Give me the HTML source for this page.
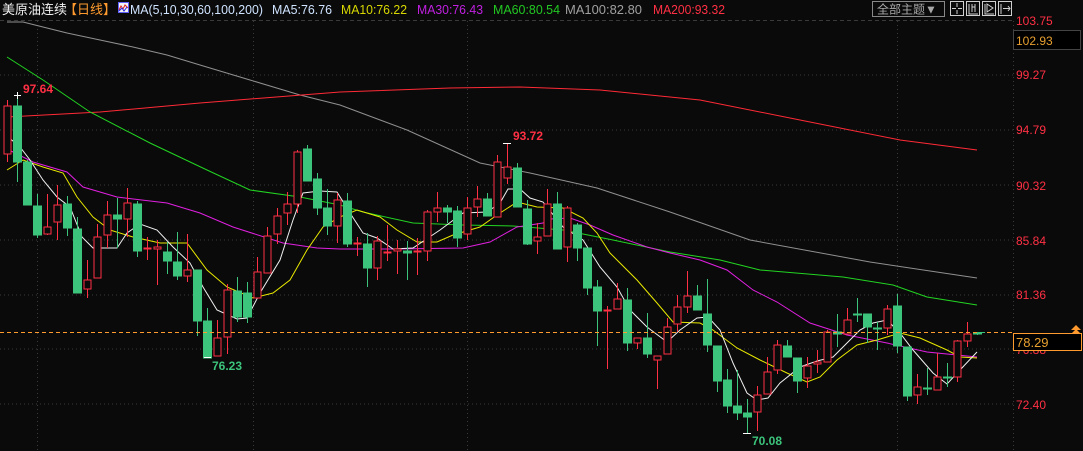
<!DOCTYPE html>
<html><head><meta charset="utf-8"><style>
html,body{margin:0;padding:0;background:#0a0a0a;width:1083px;height:451px;overflow:hidden}
svg{display:block}
text{font-family:"Liberation Sans","Noto Sans CJK SC",sans-serif}
</style></head><body>
<svg width="1083" height="451" viewBox="0 0 1083 451" xmlns="http://www.w3.org/2000/svg">
<rect width="1083" height="451" fill="#0a0a0a"/>
<g stroke="#3a3a3a" stroke-width="1" stroke-dasharray="1,3">
<line x1="0" y1="75" x2="1013" y2="75"/><line x1="0" y1="130" x2="1013" y2="130"/>
<line x1="0" y1="185" x2="1013" y2="185"/><line x1="0" y1="240" x2="1013" y2="240"/>
<line x1="0" y1="295" x2="1013" y2="295"/><line x1="0" y1="349" x2="1013" y2="349"/>
<line x1="0" y1="404" x2="1013" y2="404"/>
<line x1="37.5" y1="21" x2="37.5" y2="451"/><line x1="253.5" y1="21" x2="253.5" y2="451"/>
<line x1="467.5" y1="21" x2="467.5" y2="451"/><line x1="897.5" y1="21" x2="897.5" y2="451"/>
<line x1="1013.5" y1="21" x2="1013.5" y2="451"/>
</g>
<line x1="0" y1="20.5" x2="1013" y2="20.5" stroke="#3a3a3a" stroke-dasharray="4,3"/>
<g fill="none" stroke-width="1">
<polyline stroke="#909090" points="7,22 23,22 35,25 67,33 100,40 133,47 167,55 200,65 250,80 300,95 340,105 407,130 480,163 530,173 597,188 670,212 750,240 870,262 977,278"/>
<polyline stroke="#ff2a36" points="7,117 100,112 200,103 340,92 450,88 520,87 600,90 700,100 800,120 900,140 977,150"/>
<polyline stroke="#22d422" points="7,57 43,80 90,112 150,143 207,170 250,190 300,197 340,205 363,212 413,223 463,225 513,226 563,230 613,240 670,252 720,260 760,270 843,277 893,285 927,297 977,305"/>
<polyline stroke="#e020e0" points="7,149 33,162 67,172 83,187 117,197 167,203 200,213 233,227 283,243 317,248 340,249 397,249 463,248 490,242 517,227 543,223 550,219 570,218 590,225 613,235 647,247 670,253 700,260 727,270 753,290 777,302 810,323 847,335 887,343 927,352 977,357"/>
<polyline stroke="#e8e800" points="7,170 23,160 43,167 63,173 77,197 93,217 110,230 133,237 160,243 187,243 207,270 227,287 253,298 273,293 290,280 307,250 323,227 340,217 357,210 380,217 397,230 417,242 437,242 453,235 480,227 497,215 517,202 537,207 563,208 583,218 597,233 610,253 637,280 657,303 673,322 700,323 713,330 737,348 760,360 787,373 807,382 820,377 837,360 857,345 877,340 900,333 920,338 947,350 960,357 977,358"/>
<polyline stroke="#f0f0f0" points="7,136 20,147 30,160 43,180 57,197 70,207 82,237 93,248 117,248 127,233 140,224 157,230 173,247 190,263 203,287 217,310 237,319 247,318 260,293 280,260 293,220 303,193 320,191 337,192 350,213 363,233 377,238 393,249 413,248 440,230 463,213 487,212 500,203 508,189 520,189 530,198 543,202 563,227 583,240 600,267 617,287 630,310 647,327 667,342 680,330 697,318 708,317 720,330 733,363 747,393 757,400 768,398 780,383 800,367 817,361 833,357 847,343 860,330 873,323 887,320 900,333 913,350 933,373 947,384 960,370 977,352"/>
</g>
<g stroke-width="1">
<g stroke="#ff3044" fill="#0a0a0a">
<line x1="7.5" y1="100" x2="7.5" y2="162"/><rect x="4" y="106" width="7" height="48"/>
<line x1="47.5" y1="194" x2="47.5" y2="235"/><rect x="44" y="227" width="7" height="7"/>
<line x1="57.5" y1="185" x2="57.5" y2="240"/><rect x="54" y="205" width="7" height="17"/>
<line x1="87.5" y1="260" x2="87.5" y2="298"/><rect x="84" y="280" width="7" height="9"/>
<line x1="97.5" y1="224" x2="97.5" y2="278"/><rect x="94" y="237" width="7" height="41"/>
<line x1="107.5" y1="201" x2="107.5" y2="248"/><rect x="104" y="215" width="7" height="20"/>
<line x1="127.5" y1="188" x2="127.5" y2="237"/><rect x="124" y="203" width="7" height="16"/>
<line x1="147.5" y1="237" x2="147.5" y2="260"/><rect x="144" y="248" width="7" height="1"/>
<line x1="157.5" y1="240" x2="157.5" y2="285"/><rect x="154" y="247" width="7" height="2"/>
<line x1="187.5" y1="234" x2="187.5" y2="282"/><rect x="184" y="270" width="7" height="6"/>
<line x1="217.5" y1="320" x2="217.5" y2="356"/><rect x="214" y="338" width="7" height="18"/>
<line x1="227.5" y1="284" x2="227.5" y2="354"/><rect x="224" y="290" width="7" height="47"/>
<line x1="257.5" y1="257" x2="257.5" y2="298"/><rect x="254" y="272" width="7" height="26"/>
<line x1="267.5" y1="227" x2="267.5" y2="273"/><rect x="264" y="236" width="7" height="37"/>
<line x1="277.5" y1="208" x2="277.5" y2="244"/><rect x="274" y="216" width="7" height="18"/>
<line x1="287.5" y1="192" x2="287.5" y2="225"/><rect x="284" y="204" width="7" height="9"/>
<line x1="297.5" y1="150" x2="297.5" y2="213"/><rect x="294" y="152" width="7" height="52"/>
<line x1="337.5" y1="193" x2="337.5" y2="243"/><rect x="334" y="200" width="7" height="26"/>
<line x1="357.5" y1="237" x2="357.5" y2="256"/><rect x="354" y="243" width="7" height="1"/>
<line x1="377.5" y1="236" x2="377.5" y2="280"/><rect x="374" y="241" width="7" height="27"/>
<line x1="387.5" y1="225" x2="387.5" y2="261"/><rect x="384" y="252" width="7" height="1"/>
<line x1="397.5" y1="240" x2="397.5" y2="274"/><rect x="394" y="249" width="7" height="2"/>
<line x1="417.5" y1="238" x2="417.5" y2="275"/><rect x="414" y="251" width="7" height="1"/>
<line x1="427.5" y1="210" x2="427.5" y2="261"/><rect x="424" y="212" width="7" height="39"/>
<line x1="437.5" y1="192" x2="437.5" y2="222"/><rect x="434" y="208" width="7" height="4"/>
<line x1="467.5" y1="197" x2="467.5" y2="240"/><rect x="464" y="208" width="7" height="26"/>
<line x1="477.5" y1="186" x2="477.5" y2="217"/><rect x="474" y="199" width="7" height="8"/>
<line x1="497.5" y1="155" x2="497.5" y2="217"/><rect x="494" y="162" width="7" height="55"/>
<line x1="507.5" y1="143" x2="507.5" y2="184"/><rect x="504" y="167" width="7" height="11"/>
<line x1="537.5" y1="223" x2="537.5" y2="254"/><rect x="534" y="237" width="7" height="4"/>
<line x1="547.5" y1="189" x2="547.5" y2="236"/><rect x="544" y="204" width="7" height="32"/>
<line x1="567.5" y1="206" x2="567.5" y2="262"/><rect x="564" y="208" width="7" height="39"/>
<line x1="607.5" y1="306" x2="607.5" y2="369"/><rect x="604" y="310" width="7" height="1"/>
<line x1="617.5" y1="283" x2="617.5" y2="309"/><rect x="614" y="299" width="7" height="10"/>
<line x1="637.5" y1="338" x2="637.5" y2="349"/><rect x="634" y="338" width="7" height="5"/>
<line x1="657.5" y1="356" x2="657.5" y2="389"/><rect x="654" y="356" width="7" height="4"/>
<line x1="667.5" y1="318" x2="667.5" y2="354"/><rect x="664" y="327" width="7" height="27"/>
<line x1="677.5" y1="295" x2="677.5" y2="332"/><rect x="674" y="307" width="7" height="17"/>
<line x1="687.5" y1="271" x2="687.5" y2="313"/><rect x="684" y="296" width="7" height="11"/>
<line x1="757.5" y1="386" x2="757.5" y2="431"/><rect x="754" y="395" width="7" height="17"/>
<line x1="767.5" y1="357" x2="767.5" y2="394"/><rect x="764" y="372" width="7" height="22"/>
<line x1="777.5" y1="340" x2="777.5" y2="374"/><rect x="774" y="345" width="7" height="25"/>
<line x1="807.5" y1="357" x2="807.5" y2="388"/><rect x="804" y="366" width="7" height="12"/>
<line x1="817.5" y1="350" x2="817.5" y2="373"/><rect x="814" y="362" width="7" height="2"/>
<line x1="827.5" y1="330" x2="827.5" y2="362"/><rect x="824" y="332" width="7" height="30"/>
<line x1="847.5" y1="308" x2="847.5" y2="334"/><rect x="844" y="320" width="7" height="14"/>
<line x1="887.5" y1="305" x2="887.5" y2="335"/><rect x="884" y="309" width="7" height="19"/>
<line x1="917.5" y1="374" x2="917.5" y2="404"/><rect x="914" y="387" width="7" height="8"/>
<line x1="937.5" y1="353" x2="937.5" y2="390"/><rect x="934" y="377" width="7" height="13"/>
<line x1="957.5" y1="340" x2="957.5" y2="382"/><rect x="954" y="341" width="7" height="36"/>
<line x1="967.5" y1="322" x2="967.5" y2="347"/><rect x="964" y="334" width="7" height="7"/>
</g>
<g stroke="#3cc47c" fill="#3cc47c">
<line x1="17.5" y1="95" x2="17.5" y2="182"/><rect x="13.5" y="106" width="8" height="56"/>
<line x1="27.5" y1="160" x2="27.5" y2="205"/><rect x="23.5" y="162" width="8" height="43"/>
<line x1="37.5" y1="194" x2="37.5" y2="238"/><rect x="33.5" y="206" width="8" height="29"/>
<line x1="67.5" y1="196" x2="67.5" y2="236"/><rect x="63.5" y="204" width="8" height="24"/>
<line x1="77.5" y1="217" x2="77.5" y2="293"/><rect x="73.5" y="229" width="8" height="64"/>
<line x1="117.5" y1="198" x2="117.5" y2="248"/><rect x="113.5" y="215" width="8" height="4"/>
<line x1="137.5" y1="201" x2="137.5" y2="257"/><rect x="133.5" y="204" width="8" height="47"/>
<line x1="167.5" y1="242" x2="167.5" y2="274"/><rect x="163.5" y="252" width="8" height="9"/>
<line x1="177.5" y1="232" x2="177.5" y2="280"/><rect x="173.5" y="262" width="8" height="14"/>
<line x1="197.5" y1="270" x2="197.5" y2="336"/><rect x="193.5" y="270" width="8" height="51"/>
<line x1="207.5" y1="308" x2="207.5" y2="358"/><rect x="203.5" y="321" width="8" height="37"/>
<line x1="237.5" y1="277" x2="237.5" y2="322"/><rect x="233.5" y="291" width="8" height="26"/>
<line x1="247.5" y1="282" x2="247.5" y2="323"/><rect x="243.5" y="293" width="8" height="24"/>
<line x1="307.5" y1="145" x2="307.5" y2="181"/><rect x="303.5" y="149" width="8" height="32"/>
<line x1="317.5" y1="173" x2="317.5" y2="215"/><rect x="313.5" y="179" width="8" height="29"/>
<line x1="327.5" y1="189" x2="327.5" y2="235"/><rect x="323.5" y="208" width="8" height="18"/>
<line x1="347.5" y1="193" x2="347.5" y2="247"/><rect x="343.5" y="201" width="8" height="43"/>
<line x1="367.5" y1="233" x2="367.5" y2="287"/><rect x="363.5" y="244" width="8" height="24"/>
<line x1="407.5" y1="241" x2="407.5" y2="280"/><rect x="403.5" y="251" width="8" height="2"/>
<line x1="447.5" y1="205" x2="447.5" y2="223"/><rect x="443.5" y="208" width="8" height="4"/>
<line x1="457.5" y1="206" x2="457.5" y2="247"/><rect x="453.5" y="211" width="8" height="27"/>
<line x1="487.5" y1="193" x2="487.5" y2="216"/><rect x="483.5" y="199" width="8" height="17"/>
<line x1="517.5" y1="163" x2="517.5" y2="207"/><rect x="513.5" y="168" width="8" height="39"/>
<line x1="527.5" y1="200" x2="527.5" y2="245"/><rect x="523.5" y="209" width="8" height="35"/>
<line x1="557.5" y1="192" x2="557.5" y2="249"/><rect x="553.5" y="204" width="8" height="45"/>
<line x1="577.5" y1="223" x2="577.5" y2="261"/><rect x="573.5" y="225" width="8" height="23"/>
<line x1="587.5" y1="248" x2="587.5" y2="295"/><rect x="583.5" y="248" width="8" height="40"/>
<line x1="597.5" y1="280" x2="597.5" y2="346"/><rect x="593.5" y="287" width="8" height="24"/>
<line x1="627.5" y1="288" x2="627.5" y2="351"/><rect x="623.5" y="300" width="8" height="43"/>
<line x1="647.5" y1="313" x2="647.5" y2="358"/><rect x="643.5" y="338" width="8" height="16"/>
<line x1="697.5" y1="285" x2="697.5" y2="310"/><rect x="693.5" y="296" width="8" height="14"/>
<line x1="707.5" y1="279" x2="707.5" y2="352"/><rect x="703.5" y="314" width="8" height="31"/>
<line x1="717.5" y1="346" x2="717.5" y2="392"/><rect x="713.5" y="346" width="8" height="35"/>
<line x1="727.5" y1="369" x2="727.5" y2="413"/><rect x="723.5" y="380" width="8" height="26"/>
<line x1="737.5" y1="370" x2="737.5" y2="420"/><rect x="733.5" y="406" width="8" height="7"/>
<line x1="747.5" y1="399" x2="747.5" y2="433"/><rect x="743.5" y="413" width="8" height="4"/>
<line x1="787.5" y1="340" x2="787.5" y2="357"/><rect x="783.5" y="346" width="8" height="11"/>
<line x1="797.5" y1="358" x2="797.5" y2="393"/><rect x="793.5" y="358" width="8" height="23"/>
<line x1="837.5" y1="314" x2="837.5" y2="347"/><rect x="833.5" y="332" width="8" height="2"/>
<line x1="857.5" y1="298" x2="857.5" y2="322"/><rect x="853.5" y="314" width="8" height="1"/>
<line x1="867.5" y1="314" x2="867.5" y2="343"/><rect x="863.5" y="314" width="8" height="13"/>
<line x1="877.5" y1="322" x2="877.5" y2="350"/><rect x="873.5" y="328" width="8" height="1"/>
<line x1="897.5" y1="294" x2="897.5" y2="353"/><rect x="893.5" y="306" width="8" height="40"/>
<line x1="907.5" y1="347" x2="907.5" y2="401"/><rect x="903.5" y="347" width="8" height="49"/>
<line x1="927.5" y1="368" x2="927.5" y2="395"/><rect x="923.5" y="388" width="8" height="1"/>
<line x1="947.5" y1="363" x2="947.5" y2="387"/><rect x="943.5" y="377" width="8" height="1"/>
<line x1="977.5" y1="332" x2="977.5" y2="335"/><rect x="973.5" y="333" width="8" height="1"/>
</g>
</g>
<g stroke="#ffffff" stroke-width="1">
<line x1="14" y1="95.5" x2="21" y2="95.5"/><line x1="17.5" y1="92" x2="17.5" y2="99"/>
<line x1="503" y1="143.5" x2="511" y2="143.5"/>
<line x1="204" y1="357.5" x2="211" y2="357.5"/>
<line x1="743" y1="433.5" x2="751" y2="433.5"/>
</g>
<text x="23" y="93" font-size="12" font-weight="bold" fill="#ff3044">97.64</text>
<text x="513" y="140" font-size="12" font-weight="bold" fill="#ff3044">93.72</text>
<text x="212" y="370" font-size="12" font-weight="bold" fill="#3cc47c">76.23</text>
<text x="752" y="445" font-size="12" font-weight="bold" fill="#3cc47c">70.08</text>
<line x1="0" y1="332.5" x2="1013" y2="332.5" stroke="#ff9a2e" stroke-dasharray="4,3"/>
<line x1="977" y1="332.5" x2="985" y2="332.5" stroke="#3cc47c" stroke-width="1"/>
<g font-size="12" fill="#ff3044">
<text x="1016" y="25">103.75</text>
<text x="1016" y="79">99.27</text>
<text x="1016" y="134">94.79</text>
<text x="1016" y="190">90.32</text>
<text x="1016" y="245">85.84</text>
<text x="1016" y="299">81.36</text>
<text x="1016" y="354">76.88</text>
<text x="1016" y="409">72.40</text>
</g>
<rect x="1013.5" y="30.5" width="67" height="19" fill="#000" stroke="#444"/>
<text x="1016" y="45" font-size="12" fill="#e8a030">102.93</text>
<rect x="1013.5" y="333.5" width="68" height="17" fill="#000" stroke="#ff9a2e"/>
<text x="1016" y="347" font-size="13" fill="#e8a030">78.29</text>
<path d="M1071 330 L1076 325 L1081 330 Z M1071 334 L1076 329 L1081 334 Z" fill="#ff9a2e"/>
<g font-size="13">
<text x="2" y="14" fill="#f0f0f0">美原油连续</text>
<text x="64" y="14" fill="#ff9a2e">【日线】</text>
<rect x="118.5" y="2.5" width="10" height="10" fill="#f4f4f4" stroke="#6060ff"/>
<polyline points="119,10 121,6 123,9 125,5 128,8" fill="none" stroke="#e02020"/>
<polyline points="119,11 122,8 124,11 127,7" fill="none" stroke="#2020e0"/>
<text x="130" y="14" fill="#cfe3ff" textLength="133" lengthAdjust="spacingAndGlyphs">MA(5,10,30,60,100,200)</text>
<text x="272" y="14" fill="#cfe3ff" textLength="60" lengthAdjust="spacingAndGlyphs">MA5:76.76</text>
<text x="341" y="14" fill="#d8d800" textLength="66" lengthAdjust="spacingAndGlyphs">MA10:76.22</text>
<text x="417" y="14" fill="#c020e0" textLength="66" lengthAdjust="spacingAndGlyphs">MA30:76.43</text>
<text x="493" y="14" fill="#22c822" textLength="67" lengthAdjust="spacingAndGlyphs">MA60:80.54</text>
<text x="565" y="14" fill="#a0a0a0" textLength="77" lengthAdjust="spacingAndGlyphs">MA100:82.80</text>
<text x="653" y="14" fill="#ff3044" textLength="72" lengthAdjust="spacingAndGlyphs">MA200:93.32</text>
</g>
<rect x="872.5" y="1.5" width="72" height="15" fill="#0a0a0a" stroke="#888"/>
<text x="877" y="13.5" font-size="12" fill="#a8a8a8">全部主题▼</text>
<g stroke="#cfcfcf" fill="none">
<rect x="950.5" y="1.5" width="13" height="14"/>
<rect x="966.5" y="1.5" width="13" height="14"/>
<rect x="982.5" y="1.5" width="13" height="14"/>
<rect x="998.5" y="1.5" width="13" height="14"/>
<path d="M957 3v4M957 10v4M952 8.5h4M958 8.5h4"/>
<path d="M969 4v10h9M972 4v8M975 4v8M972 7h3"/>
<path d="M985 4v10h9M987 4v8l6-4z"/>
<path d="M1001 4v10M1003 8.5h7M1008 6l2 2.5-2 2.5"/>
</g>
</svg>
</body></html>
